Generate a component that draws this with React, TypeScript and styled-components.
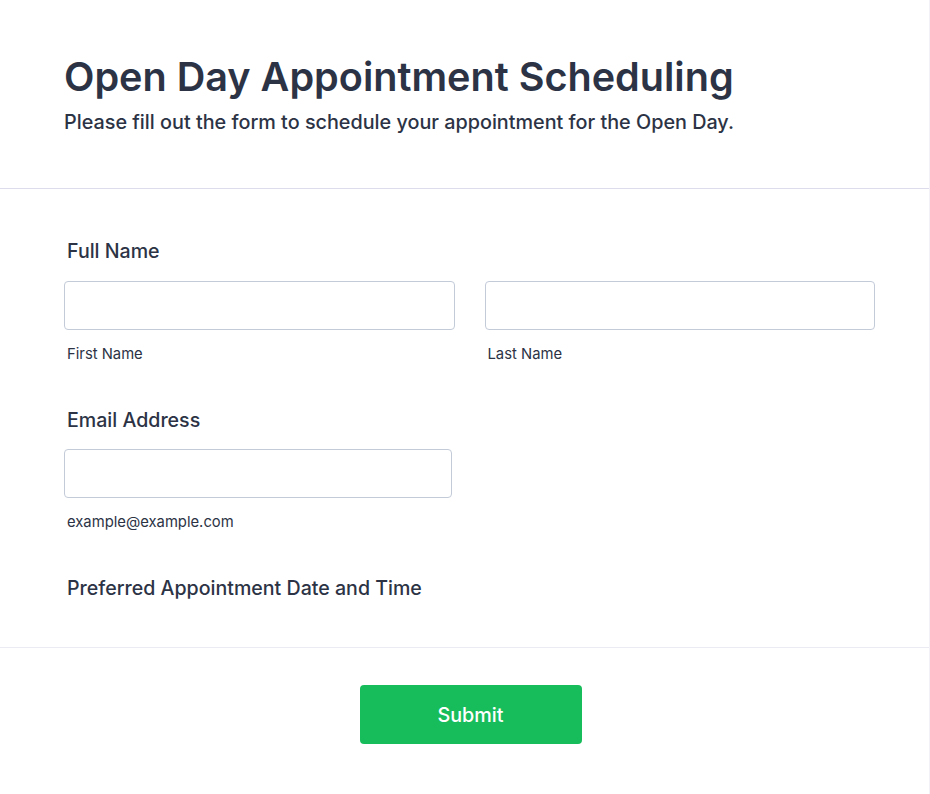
import React from "react";
import styled, { createGlobalStyle } from "styled-components";

const Global = createGlobalStyle`
  html, body { margin: 0; padding: 0; background: #ffffff; }
  body { font-family: Inter, "Noto Sans", sans-serif; color: #2c3345; }
  * { box-sizing: border-box; }
`;

const Card = styled.main`
  width: 930px;
  min-height: 794px;
  background: #ffffff;
  border-right: 1px solid #f1f1f7;
`;

const Header = styled.header`
  padding: 53px 64px 54px 64px;
  border-bottom: 1px solid #dcdcec;
`;

const Title = styled.h1`
  margin: 0;
  font-size: 39.6px;
  line-height: 48px;
  font-weight: 600;
  color: #2c3345;
`;

const Subtitle = styled.p`
  margin: 9px 0 0 0;
  font-size: 19.8px;
  line-height: 24px;
  font-weight: 500;
  color: #2c3345;
`;

const Form = styled.section`
  padding: 50px 54px 47px 64px;
  border-bottom: 1px solid #ebebf3;
  display: flex;
  flex-direction: column;
  gap: 45px;
`;

const Field = styled.div<{ $width?: number }>`
  display: flex;
  flex-direction: column;
  width: ${(p) => (p.$width ? `${p.$width}px` : "100%")};
`;

const Label = styled.label`
  padding-left: 3px;
  font-size: 19.6px;
  line-height: 24px;
  font-weight: 500;
  color: #2c3345;
`;

const Row = styled.div`
  display: grid;
  grid-template-columns: 1fr 1fr;
  column-gap: 30px;
  margin-top: 18px;
`;

const Single = styled.div`
  margin-top: 17px;
`;

const Col = styled.div`
  display: flex;
  flex-direction: column;
`;

const Input = styled.input`
  height: 49px;
  width: 100%;
  border: 1px solid #c3cad8;
  border-radius: 4px;
  background: #fff;
  font-family: inherit;
  font-size: 16px;
  padding: 0 12px;
  outline: none;
`;

const SubLabel = styled.span`
  margin-top: 15px;
  padding-left: 3px;
  font-size: 14.8px;
  line-height: 18px;
  font-weight: 400;
  color: #2c3345;
`;

const Footer = styled.footer`
  padding-top: 37px;
  display: flex;
  justify-content: center;
`;

const SubmitButton = styled.button`
  width: 222px;
  height: 59px;
  margin-left: 12px;
  border: none;
  border-radius: 4px;
  background: #18bd5b;
  color: #ffffff;
  font-family: inherit;
  font-size: 19.8px;
  font-weight: 500;
  cursor: pointer;
`;

export default function App() {
  return (
    <>
      <Global />
      <Card>
        <Header>
          <Title>Open Day Appointment Scheduling</Title>
          <Subtitle>Please fill out the form to schedule your appointment for the Open Day.</Subtitle>
        </Header>
        <Form>
          <Field>
            <Label>Full Name</Label>
            <Row>
              <Col>
                <Input type="text" />
                <SubLabel>First Name</SubLabel>
              </Col>
              <Col>
                <Input type="text" />
                <SubLabel>Last Name</SubLabel>
              </Col>
            </Row>
          </Field>
          <Field $width={388}>
            <Label>Email Address</Label>
            <Single>
              <Input type="email" />
            </Single>
            <SubLabel>example@example.com</SubLabel>
          </Field>
          <Field>
            <Label>Preferred Appointment Date and Time</Label>
          </Field>
        </Form>
        <Footer>
          <SubmitButton type="button">Submit</SubmitButton>
        </Footer>
      </Card>
    </>
  );
}
